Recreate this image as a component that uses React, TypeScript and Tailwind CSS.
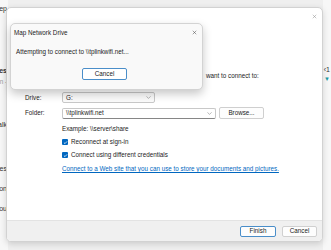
import React from "react";

const font = { fontFamily: '"Liberation Sans", Arial, sans-serif' };

function CloseIcon({ className }: { className?: string }) {
	return (
		<svg viewBox="0 0 10 10" className={className} fill="none" stroke="currentColor" strokeWidth="1">
			<path d="M1.5 1.5 L8.5 8.5 M8.5 1.5 L1.5 8.5" />
		</svg>
	);
}

function Chevron() {
	return (
		<svg viewBox="0 0 8 5" className="w-[5px] h-[3px] text-[#8a8a8a]" fill="none" stroke="currentColor" strokeWidth="1">
			<path d="M0.5 0.5 L4 4 L7.5 0.5" />
		</svg>
	);
}

function Check({ label }: { label: string }) {
	return (
		<div className="flex items-center h-[8px]">
			<div className="w-[6px] h-[6px] rounded-[1px] bg-[#0067c0] flex items-center justify-center">
				<svg viewBox="0 0 8 8" className="w-[5px] h-[5px]" fill="none" stroke="white" strokeWidth="1.2">
					<path d="M1.5 4.2 L3.2 5.8 L6.5 2.2" />
				</svg>
			</div>
			<span className="ml-[3px]">{label}</span>
		</div>
	);
}

export default function App() {
	return (
		<div className="relative w-[331px] h-[250px] overflow-hidden bg-[#efefef] text-[6.3px] leading-[8px] text-[#1b1b1b]" style={font}>
			{/* back window, mostly hidden */}
			<div className="absolute left-[-200px] top-0 w-[208px] h-full bg-[#f7f7f7] flex flex-col items-end pr-[1px] text-[#333]">
				<span className="mt-[5px] text-[7px]">Step</span>
				<span className="mt-[54px] text-[7px] font-bold">Drives</span>
				<span className="mt-[3px] text-[#999]">Location -</span>
				<span className="mt-[35px] text-[7px]">Talk</span>
				<span className="mt-[36px] text-[7px]">Drives</span>
				<span className="mt-[12px] text-[7px]">Location</span>
				<span className="mt-[12px] text-[7px]">You</span>
			</div>
			<div className="absolute right-0 top-0 w-[8px] h-full bg-[#f7f7f7] flex flex-col items-end pr-[1px]">
				<span className="mt-[66px] text-[7px] text-[#333]">‹1</span>
				<span className="mt-[1px] text-[6px] text-[#1a9ba5]">▼</span>
			</div>

			{/* main wizard */}
			<div className="absolute left-[6px] top-[7px] w-[317px] h-[235px] flex flex-col rounded-[5px] border border-[#d2d2d2] bg-white shadow-[0_2px_6px_rgba(0,0,0,0.15)] overflow-hidden">
				<div className="h-[16px] flex justify-end items-center pr-[5px] pt-[1px]">
					<CloseIcon className="w-[5px] h-[5px] text-[#8c8c8c]" />
				</div>
				<div className="flex-1 flex flex-col pl-[18px]">
					<div className="mt-[48px] flex whitespace-nowrap">
						<span className="w-[181px]" />
						<span>want to connect to:</span>
					</div>
					<div className="mt-[12px] flex items-center">
						<span className="w-[37px]">Drive:</span>
						<div className="w-[93px] h-[11px] rounded-[2px] border border-[#c8c8c8] bg-[#fbfbfb] flex items-center justify-between px-[3px]">
							<span>G:</span>
							<Chevron />
						</div>
					</div>
					<div className="mt-[4px] flex items-center">
						<span className="w-[37px]">Folder:</span>
						<div className="w-[154px] h-[11px] rounded-[2px] border border-[#c8c8c8] border-b-[#868686] bg-white flex items-center justify-between px-[3px]">
							<span>\\tplinkwifi.net</span>
							<Chevron />
						</div>
						<div className="ml-[3px] w-[45px] h-[12px] rounded-[2px] border border-[#cfcfcf] bg-[#fdfdfd] flex items-center justify-center">Browse...</div>
					</div>
					<div className="mt-[6px] ml-[37px]">Example: \\server\share</div>
					<div className="mt-[5px] ml-[37px]">
						<Check label="Reconnect at sign-in" />
					</div>
					<div className="mt-[5px] ml-[37px]">
						<Check label="Connect using different credentials" />
					</div>
					<div className="mt-[6px] ml-[37px] text-[#0067c0] underline whitespace-nowrap">Connect to a Web site that you can use to store your documents and pictures.</div>
				</div>
				<div className="h-[21px] bg-[#f0f0f0] border-t border-[#e3e3e3] flex items-center justify-end gap-[6px] pr-[5px]">
					<div className="w-[36px] h-[11px] rounded-[2px] border border-[#4a8ec9] bg-[#fdfdfd] flex items-center justify-center">Finish</div>
					<div className="w-[35px] h-[11px] rounded-[2px] border border-[#d0d0d0] bg-[#fdfdfd] flex items-center justify-center">Cancel</div>
				</div>
			</div>

			{/* progress message box */}
			<div className="absolute left-[10px] top-[23px] w-[193px] h-[67px] flex flex-col rounded-[5px] border border-[#d3d3d3] bg-[#f9f9f9] shadow-[0_4px_10px_rgba(0,0,0,0.22)]">
				<div className="h-[17px] flex items-center justify-between pl-[3px] pr-[5px]">
					<span>Map Network Drive</span>
					<CloseIcon className="w-[5px] h-[5px] text-[#444]" />
				</div>
				<div className="pl-[5px] mt-[7px]">Attempting to connect to \\tplinkwifi.net...</div>
				<div className="mt-[12px] flex justify-center pr-[4px]">
					<div className="w-[45px] h-[12px] rounded-[2px] border border-[#4a8ec9] bg-white flex items-center justify-center">Cancel</div>
				</div>
			</div>
		</div>
	);
}
